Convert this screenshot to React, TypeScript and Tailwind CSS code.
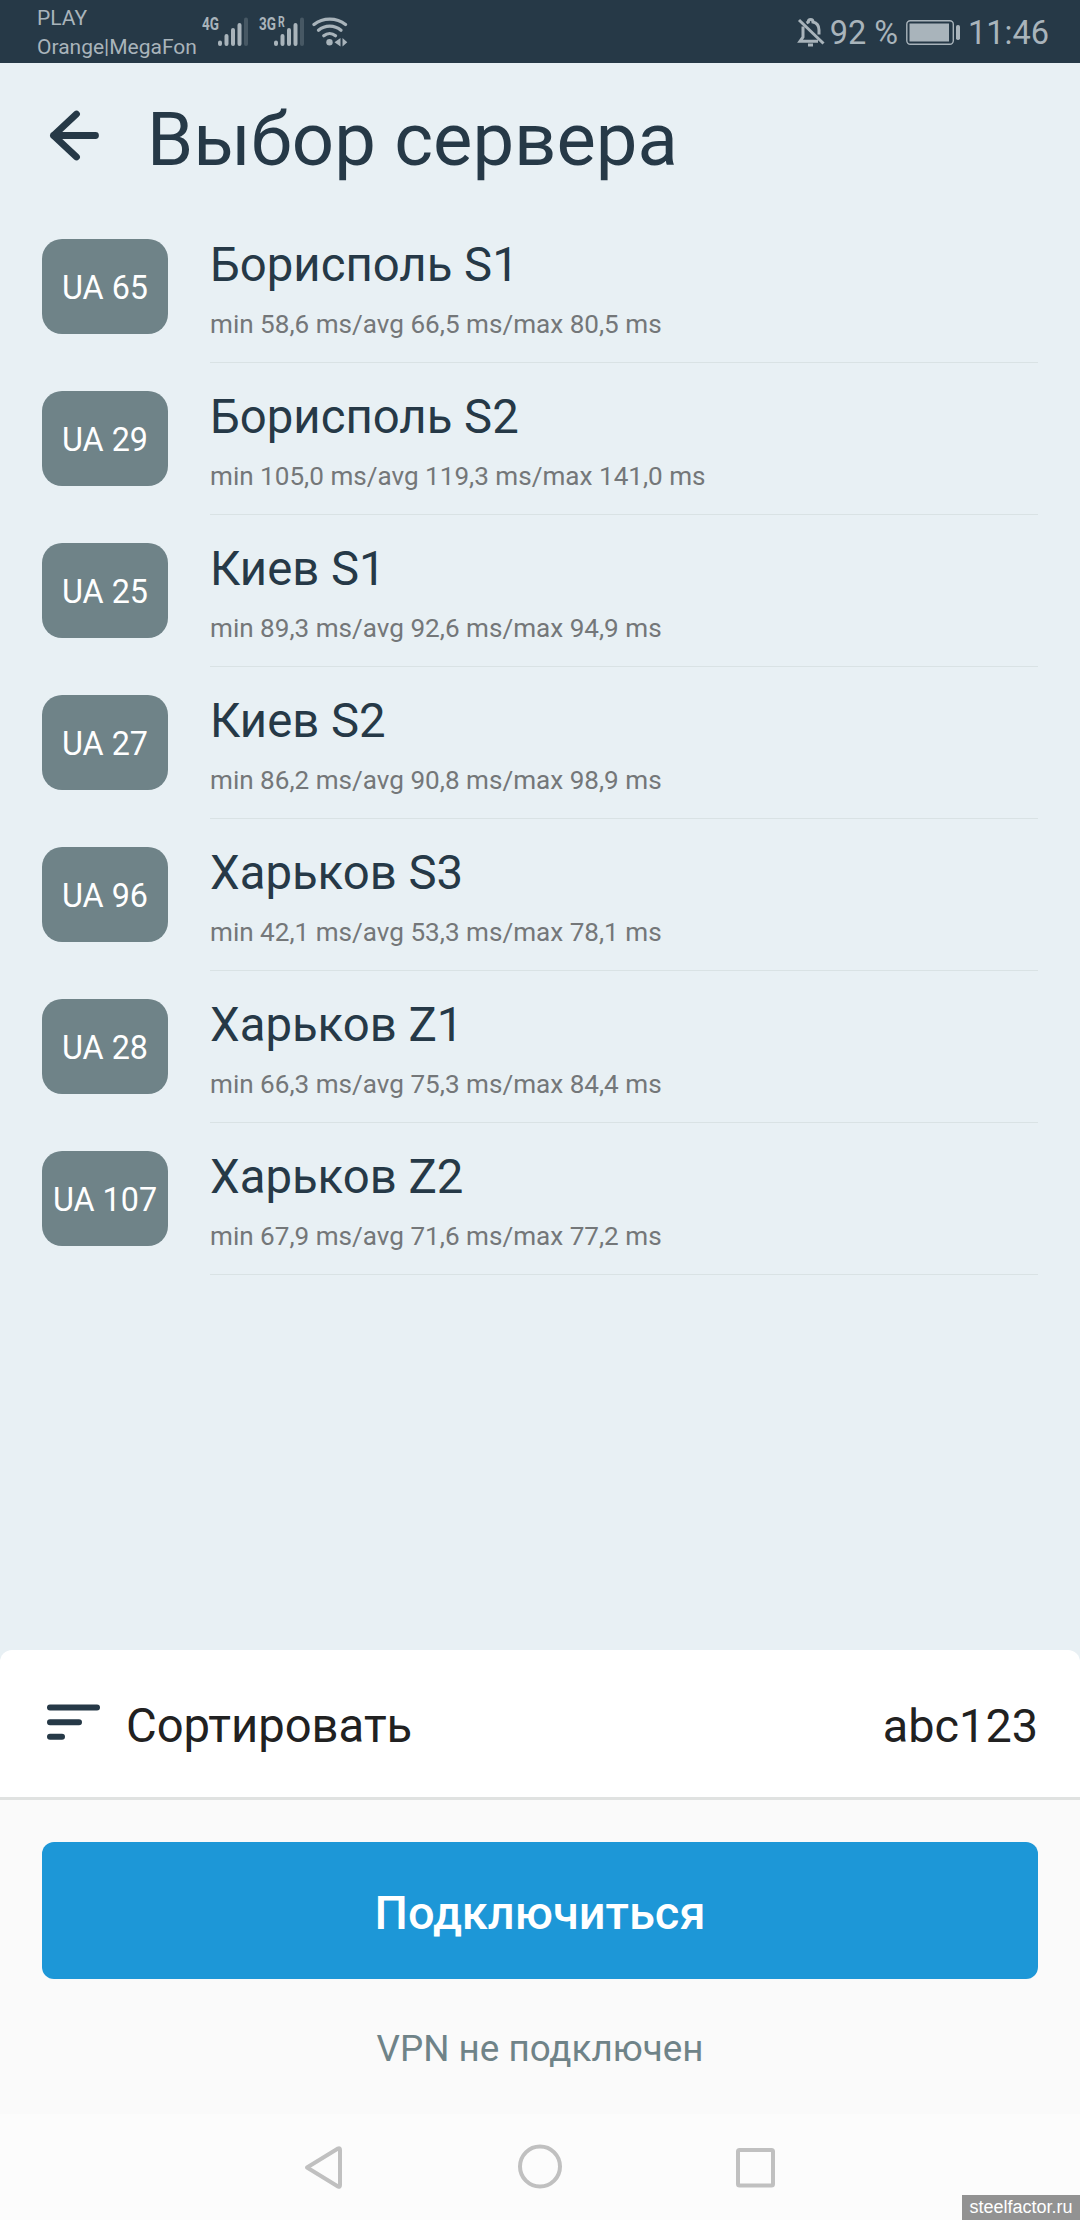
import { useState } from "react";

const servers = [
  { id: "UA 65", name: "Борисполь S1", ping: "min 58,6 ms/avg 66,5 ms/max 80,5 ms" },
  { id: "UA 29", name: "Борисполь S2", ping: "min 105,0 ms/avg 119,3 ms/max 141,0 ms" },
  { id: "UA 25", name: "Киев S1", ping: "min 89,3 ms/avg 92,6 ms/max 94,9 ms" },
  { id: "UA 27", name: "Киев S2", ping: "min 86,2 ms/avg 90,8 ms/max 98,9 ms" },
  { id: "UA 96", name: "Харьков S3", ping: "min 42,1 ms/avg 53,3 ms/max 78,1 ms" },
  { id: "UA 28", name: "Харьков Z1", ping: "min 66,3 ms/avg 75,3 ms/max 84,4 ms" },
  { id: "UA 107", name: "Харьков Z2", ping: "min 67,9 ms/avg 71,6 ms/max 77,2 ms" },
];

function SignalBars() {
  return (
    <svg width="32" height="30" viewBox="0 0 32 30" stroke="currentColor" strokeWidth="4" strokeLinecap="round">
      <path d="M3 27v-1.500M9.500 27v-8M16 27V13M22.500 27V8" />
      <path d="M29 27V2.500" opacity="0.25" />
    </svg>
  );
}

function WifiIcon() {
  return (
    <svg width="36" height="30" viewBox="0 0 36 30" fill="none" stroke="currentColor" strokeWidth="3.3" strokeLinecap="round">
      <path d="M2 7.500C11 .3 24.500 .3 33.500 7.500" />
      <path d="M6.500 13.300C13 7.800 22.500 7.800 29 13.300" />
      <path d="M11.800 18.800C15.300 15.800 20 15.800 23.500 18.800" />
      <circle cx="17.500" cy="25.300" r="3.200" fill="currentColor" stroke="none" />
      <path d="M28.500 21v8.500l-6-4.200zM30.500 21v8.500l4.800-4.200z" fill="currentColor" stroke="none" />
    </svg>
  );
}

function BellOffIcon() {
  return (
    <svg width="28" height="30" viewBox="0 0 28 30" fill="none" stroke="currentColor" strokeWidth="3">
      <path d="M9.500 6 11.300 5C11.300 1.500 16 1.500 16 5c4 1 6 4 6 8V17.500" />
      <path d="M6 9.500V20L3 24.300h18" />
      <path d="M2 3 26.500 26.500" />
      <path d="M11 28h5" />
    </svg>
  );
}

function BatteryIcon() {
  return (
    <svg width="54" height="25" viewBox="0 0 54 25" fill="currentColor">
      <rect x="0.8" y="0.8" width="46.500" height="23.400" rx="3.500" fill="none" stroke="currentColor" strokeWidth="1.400" />
      <rect x="3.500" y="3.500" width="39.500" height="18" />
      <rect x="50" y="5" width="4" height="15" rx="1.800" />
    </svg>
  );
}

function StatusBar() {
  return (
    <header className="flex h-[63px] justify-between bg-[#263947] pr-[31px] pl-[37px] text-[#a9b4bb]">
      <div className="flex items-start">
        <p className="mt-1 w-[165px] text-[21px] leading-[29px] whitespace-nowrap">
          PLAY
          <br />
          Orange|MegaFon
        </p>
        <div className="mt-[17px] flex items-start">
          <span className="w-[15px] origin-left scale-x-75 text-[18px] leading-[14px] font-bold">4G</span>
          <SignalBars />
          <span className="relative ml-[10px] w-[14px]">
            <span className="block origin-left scale-x-75 text-[18px] leading-[14px] font-bold">3G</span>
            <span className="absolute top-0 left-[19px] origin-left scale-x-70 text-[15px] leading-[11px] font-bold">R</span>
          </span>
          <SignalBars />
          <span className="ml-[7px]">
            <WifiIcon />
          </span>
        </div>
      </div>
      <div className="flex items-center text-[32.5px] leading-none">
        <BellOffIcon />
        <span className="ml-[5px] pt-[3px]">92 %</span>
        <span className="ml-2 pt-px">
          <BatteryIcon />
        </span>
        <span className="ml-2 pt-[3px]">11:46</span>
      </div>
    </header>
  );
}

export default function App() {
  const [selected, setSelected] = useState<string | null>(null);

  return (
    <div className="flex h-[2220px] w-[1080px] flex-col overflow-hidden bg-[#e8f0f4] font-['Roboto',sans-serif] text-[#263947]">
      <StatusBar />

      <div className="flex h-[152px] items-center pl-[49px]">
        <button type="button" aria-label="Назад" className="mb-2">
          <svg width="51" height="53" viewBox="0 0 51 53" fill="none" stroke="currentColor" strokeWidth="6.800" strokeLinecap="round" strokeLinejoin="round">
            <path d="M46.500 26.500H4.500M27.500 5 4.500 26.500 27.500 48" />
          </svg>
        </button>
        <h1 className="ml-[47px] pt-[3px] text-[74.2px] leading-none">Выбор сервера</h1>
      </div>

      <ul className="flex-1">
        {servers.map((s) => (
          <li
            key={s.id}
            onClick={() => setSelected(s.id)}
            aria-selected={s.id === selected}
            className="flex h-[152px] items-start px-[42px]"
          >
            <span className="mt-6 grid h-[95px] w-[126px] place-items-center rounded-[20px] bg-[#6f8388] pt-1 text-[32.3px] whitespace-nowrap text-white">
              {s.id}
            </span>
            <div className="ml-[42px] h-[148px] flex-1 border-b border-[#d9e2e4] pt-[22px]">
              <p className="text-[47.3px] leading-[56px]">{s.name}</p>
              <p className="mt-[15px] text-[26.1px] leading-8 text-[#747779]">{s.ping}</p>
            </div>
          </li>
        ))}
      </ul>

      <div className="flex h-[150px] items-center justify-between rounded-t-xl border-b-3 border-[#e0e2e1] bg-white px-[42px] text-[47.2px] text-[#212121]">
        <div className="flex items-center">
          <svg width="64" height="40" viewBox="0 0 64 40" stroke="#263947" strokeWidth="6" strokeLinecap="round">
            <path d="M8 4.500h47M8 19.200h29M8 33.800h12" />
          </svg>
          <span className="ml-5 pt-[5px]">Сортировать</span>
        </div>
        <span className="pt-[5px] text-[46.800px]">abc123</span>
      </div>

      <div className="flex h-[314px] flex-col items-center bg-[#fafafa] px-[42px] pt-[42px]">
        <button type="button" className="h-[137px] w-full rounded-xl bg-[#1d97d7] pt-[5px] text-[47px] font-medium text-white">
          Подключиться
        </button>
        <p className="mt-[47px] text-[36.8px] leading-[46px] text-[#6f8388]">VPN не подключен</p>
      </div>

      <nav className="relative flex h-[106px] items-start justify-center bg-[#fcfcfc] pt-[30px]">
        <svg width="480" height="48" viewBox="300 2144 480 48" fill="none" stroke="#c0c0c0" strokeWidth="4" strokeLinejoin="round">
          <path d="M307 2167.5 338 2148.500Q340 2147.500 340 2150V2185Q340 2187.500 338 2186.500Z" />
          <circle cx="540" cy="2166.500" r="20" />
          <rect x="738" y="2150" width="35" height="35.500" rx="1.500" />
        </svg>
        <span className="absolute right-0 bottom-0 h-[25px] w-[118px] bg-[#929292] text-center font-['Liberation_Sans',sans-serif] text-[18px] leading-[25px] text-white">
          steelfactor.ru
        </span>
      </nav>
    </div>
  );
}
